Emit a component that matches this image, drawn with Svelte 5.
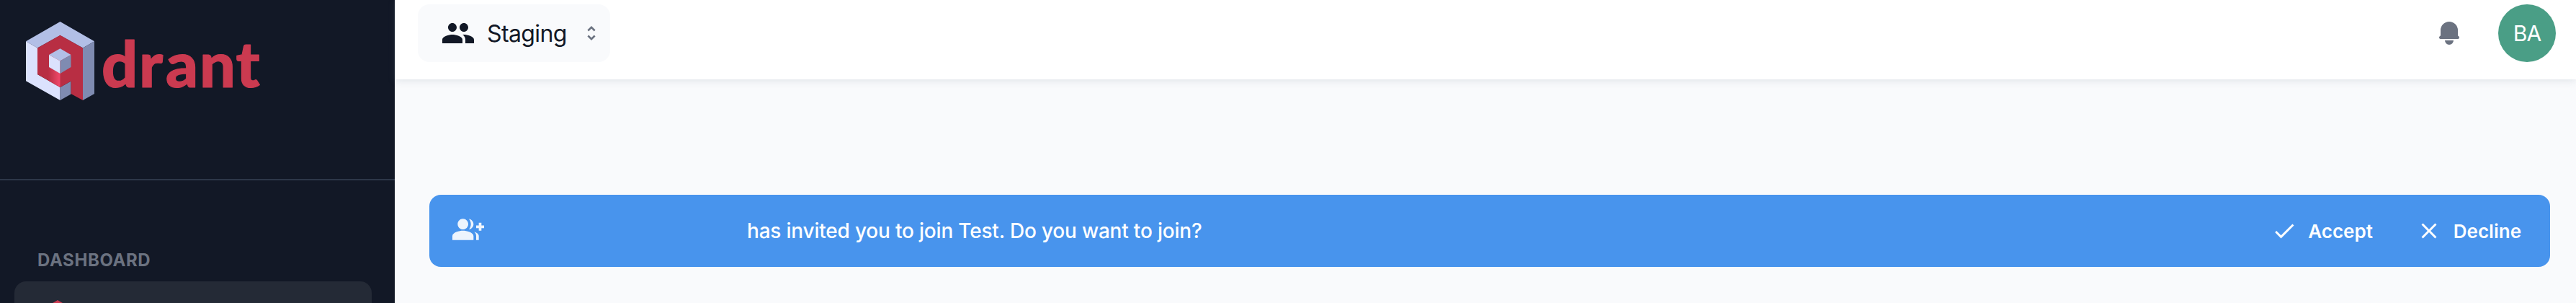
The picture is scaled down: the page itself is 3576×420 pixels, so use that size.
<script>
  const notice = 'has invited you to join Test. Do you want to join?';
</script>

<div class="app">
  <aside>
    <div class="brand">
      <svg width="370" height="118" viewBox="0 0 370 118" role="img" aria-label="qdrant">
        <defs>
          <linearGradient id="fold" x1="67" x2="83.5" y1="0" y2="0" gradientUnits="userSpaceOnUse">
            <stop offset="0" stop-color="#b82e43" />
            <stop offset="0.9" stop-color="#ec4667" />
          </linearGradient>
        </defs>
        <path fill="#b2bfe6" d="M83.5 30 131 57.3 115 66.5 83.5 49 52 66.5 36 57.3Z" />
        <path fill="#dbe2fd" d="M36 57.3 52 66.5V103L83.5 121V139L36 112.3Z" />
        <path fill="#7f8bb1" d="M131 57.3V130L115 139V66.5ZM83.5 121 98.5 112.5V130.5L83.5 139Z" />
        <path fill="#b82e43" d="M83.5 48.7 115 66.5V139L98.5 130V112.5L83.5 121 52 103V66.5Z" />
        <path fill="url(#fold)" d="M67 92.5 83.5 102V121L67 111.6Z" />
        <path fill="#b2bfe6" d="M83.5 67.3 98.5 76 83.5 84.5 68 76Z" />
        <path fill="#dbe2fd" d="M68 76 83.5 84.5V102L68 93Z" />
        <path fill="#7f8bb1" d="M98.5 76V93L83.5 102V84.5Z" />
        <text x="141 193 230 277 327.5" y="120.5">drant</text>
      </svg>
    </div>
    <h2>DASHBOARD</h2>
    <div class="item">
      <svg width="24" height="26" viewBox="0 0 24 26"><path d="M12 0 24 7V19L12 26 0 19V7Z" fill="#cb3a50" /></svg>
    </div>
  </aside>

  <section>
    <header>
      <button class="team">
        <svg width="48" height="48" viewBox="0 0 24 24"><path fill="currentColor" d="M16 11c1.66 0 2.99-1.34 2.99-3S17.66 5 16 5c-1.66 0-3 1.34-3 3s1.34 3 3 3zm-8 0c1.66 0 2.99-1.34 2.99-3S9.66 5 8 5C6.34 5 5 6.34 5 8s1.34 3 3 3zm0 2c-2.33 0-7 1.17-7 3.5V19h14v-2.5c0-2.33-4.67-3.5-7-3.5zm8 0c-.29 0-.62.02-.97.05 1.16.84 1.97 1.97 1.97 3.45V19h6v-2.5c0-2.33-4.67-3.5-7-3.5z" /></svg>
        <span>Staging</span>
        <svg class="selector" width="28" height="28" viewBox="0 0 24 24"><path fill="none" stroke="#6b7280" stroke-width="2.2" d="M8 9l4-4 4 4m0 6l-4 4-4-4" /></svg>
      </button>
      <div class="account">
        <svg width="40" height="40" viewBox="0 0 20 20"><path fill="#6b7280" d="M10 2a6 6 0 00-6 6v3.586l-.707.707A1 1 0 004 14h12a1 1 0 00.707-1.707L16 11.586V8a6 6 0 00-6-6zM10 18a3 3 0 01-3-3h6a3 3 0 01-3 3z" /></svg>
        <div class="avatar">BA</div>
      </div>
    </header>
    <main>
      <div class="banner">
        <svg class="invite" width="44" height="44" viewBox="0 0 24 24"><path fill="#fff" d="M22 9V7h-2v2h-2v2h2v2h2v-2h2V9zM8 4C5.79 4 4 5.79 4 8s1.79 4 4 4 4-1.79 4-4-1.79-4-4-4zm0 9c-2.67 0-8 1.34-8 4v3h16v-3c0-2.66-5.33-4-8-4zm4.51-8.95C13.43 5.11 14 6.49 14 8s-.57 2.89-1.49 3.95C14.47 11.7 16 10.04 16 8s-1.53-3.7-3.49-3.95zm4.02 9.78C17.42 14.66 18 15.7 18 17v3h2v-3c0-1.45-1.59-2.51-3.47-3.17z" /></svg>
        <p>{notice}</p>
        <div class="actions">
          <button class="accept">
            <svg width="36" height="36" viewBox="0 0 24 24"><path fill="#fff" d="M9 16.17 4.83 12l-1.42 1.41L9 19 21 7l-1.41-1.41z" /></svg>
            <span>Accept</span>
          </button>
          <button class="decline">
            <svg width="36" height="36" viewBox="0 0 24 24"><path fill="#fff" d="M19 6.41 17.59 5 12 10.59 6.41 5 5 6.41 10.59 12 5 17.59 6.41 19 12 13.41 17.59 19 19 17.59 13.41 12z" /></svg>
            <span>Decline</span>
          </button>
        </div>
      </div>
    </main>
  </section>
</div>

<style>
  :global(body) { margin: 0; overflow: hidden; }
  .app {
    display: flex;
    width: 3576px;
    height: 420px;
    overflow: hidden;
    background: #f9fafc;
    color: #121826;
    font-family: Inter, sans-serif;
  }
  svg { display: block; flex: none; }
  button {
    display: flex;
    align-items: center;
    box-sizing: border-box;
    border: 0;
    padding: 0;
    background: none;
    color: inherit;
    font: inherit;
    white-space: nowrap;
  }
  aside { width: 548px; flex: none; overflow: hidden; background: #121826; }
  .brand { box-sizing: border-box; height: 250px; border-bottom: 2px solid #2d3748; }
  .brand svg { overflow: visible; }
  .brand text {
    font: 900 88px Lato, sans-serif;
    fill: #cb3a50;
    stroke: #cb3a50;
    stroke-width: 1.2px;
    stroke-linejoin: round;
  }
  h2 {
    margin: 91px 0 0 52px;
    font-size: 24px;
    line-height: 40px;
    font-weight: 700;
    letter-spacing: 0.6px;
    color: #6b7280;
  }
  .item {
    box-sizing: border-box;
    width: 496px;
    height: 88px;
    margin: 9px 0 0 20px;
    padding: 26px 35px;
    border-radius: 16px;
    background: #242a36;
  }
  .item svg { margin-left: 13px; }
  section { flex: 1; min-width: 0; display: flex; flex-direction: column; }
  header {
    display: flex;
    justify-content: space-between;
    box-sizing: border-box;
    height: 110px;
    padding: 6px 28px 0 32px;
    background: #fff;
    box-shadow: 0 2px 10px rgba(100, 116, 139, 0.16);
  }
  .team {
    width: 267px;
    height: 80px;
    padding-left: 32px;
    border-radius: 16px;
    background: #f9fafc;
    font-size: 32px;
    letter-spacing: -0.6px;
  }
  .team span { width: 108px; margin-left: 16px; }
  .selector { margin-left: 23px; }
  .account { display: flex; align-items: center; gap: 48px; height: 80px; }
  .avatar {
    width: 80px;
    border-radius: 50%;
    background: #4a9e86;
    color: #fff;
    font-size: 30px;
    font-weight: 400;
    letter-spacing: -0.8px;
    line-height: 80px;
    text-align: center;
  }
  main { padding: 160px 36px 0 48px; }
  .banner {
    display: flex;
    align-items: center;
    box-sizing: border-box;
    height: 100px;
    padding-left: 32px;
    border-radius: 16px;
    background: #4894ed;
    color: #fff;
  }
  .invite { opacity: 0.9; margin-top: -5px; }
  p {
    margin: 0 0 0 365px;
    font-size: 28px;
    font-weight: 500;
    letter-spacing: -0.2px;
    white-space: nowrap;
  }
  .actions {
    display: flex;
    margin-left: auto;
    padding-right: 40px;
    font-size: 26px;
    font-weight: 600;
  }
  .accept { gap: 15px; margin-right: 60px; }
  .decline { gap: 16px; }
</style>
